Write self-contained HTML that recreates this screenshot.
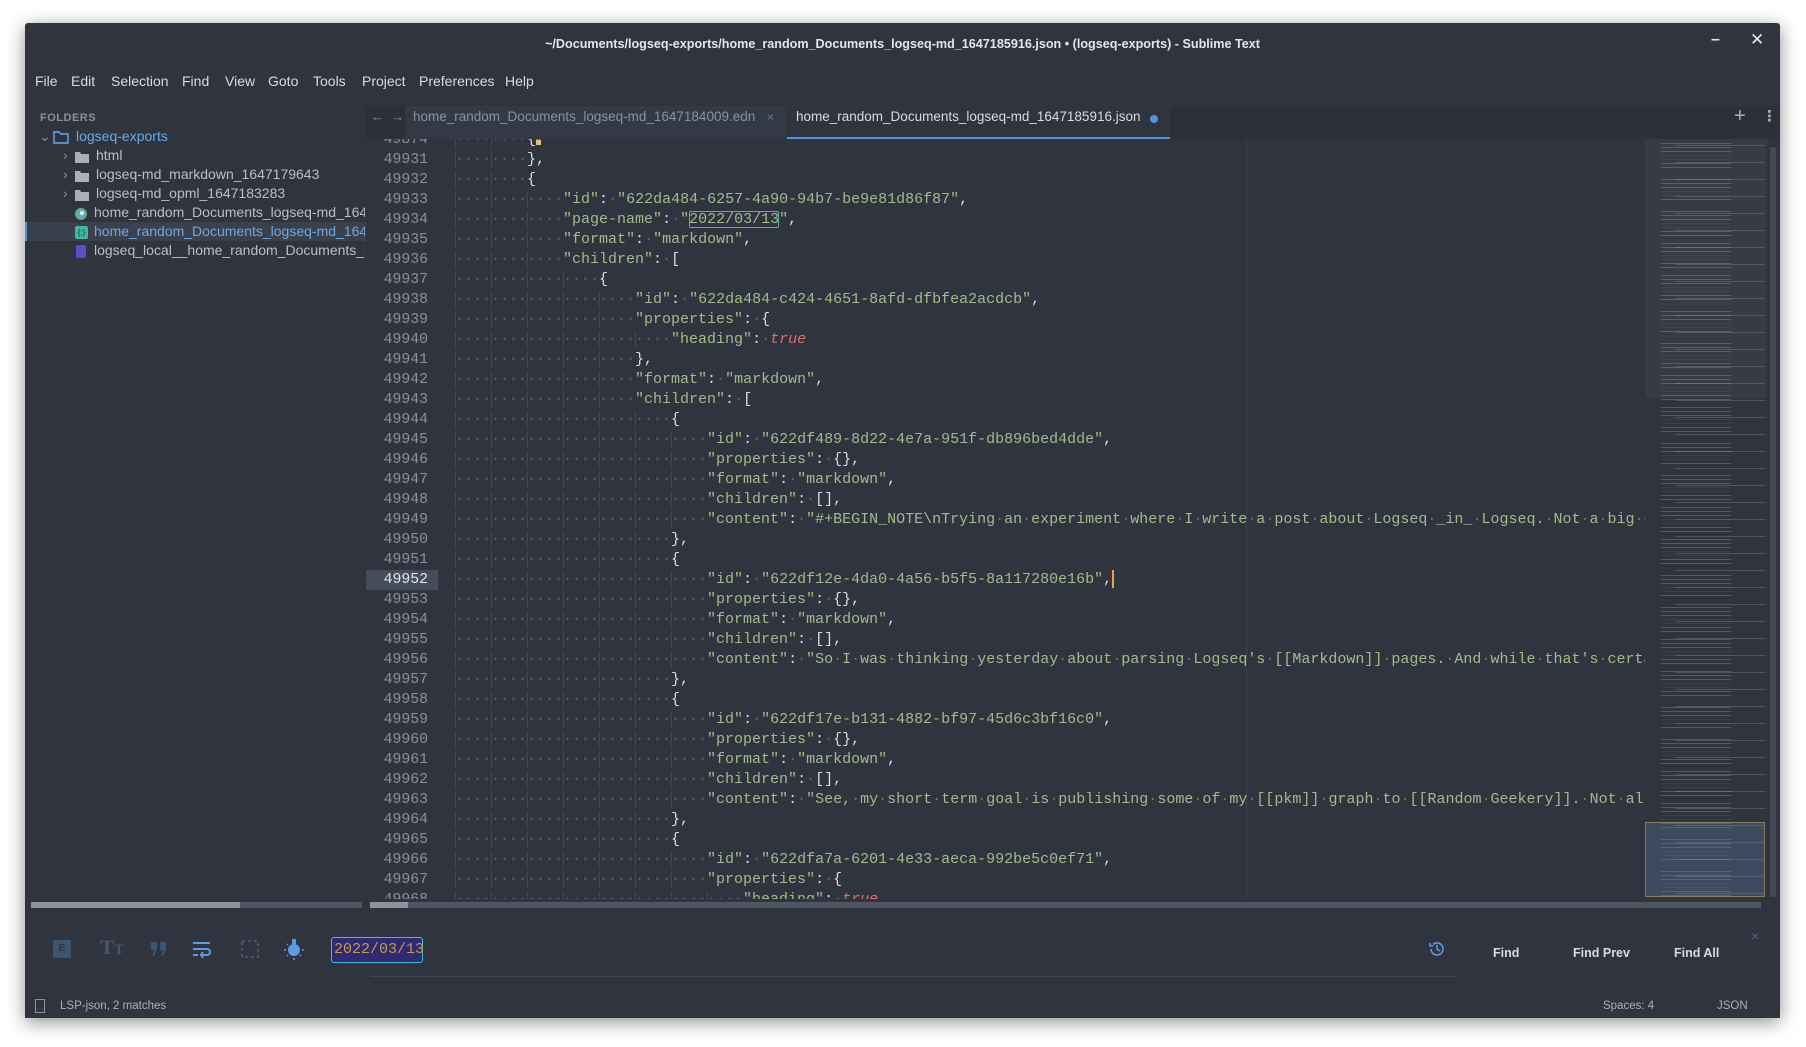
<!DOCTYPE html>
<html><head><meta charset="utf-8"><style>
*{margin:0;padding:0;box-sizing:border-box}
body{width:1806px;height:1047px;background:#fff;position:relative;overflow:hidden;font-family:"Liberation Sans","DejaVu Sans",sans-serif}
.win{position:absolute;left:25px;top:23px;width:1755px;height:995px;background:#2f343f;box-shadow:0 4px 18px rgba(0,0,0,.45);border-radius:3px 3px 0 0;overflow:hidden}
.a{position:absolute;white-space:nowrap}
.title{left:0;width:1755px;top:14px;text-align:center;color:#e4e6ea;font-weight:bold;font-size:12.6px}
.menu{top:50px;font-size:14px;color:#d8dce2}
.menu span{position:absolute;top:0}
.tree{font-size:14px;color:#b9bfc9}
.code{position:absolute;left:341px;top:116px;width:1279px;height:760px;overflow:hidden;font-family:"Liberation Mono","DejaVu Sans Mono",monospace;font-size:15px;color:#d8dee9}
.l{position:absolute;left:0;height:20px;line-height:20px;white-space:pre;width:1279px}
.n{position:absolute;left:0;width:62px;text-align:right;color:#8a919c;font-size:14.8px}
.c{position:absolute;left:89px}
.d{color:#5d6470;background:repeating-linear-gradient(to right,#434955 0 1px,transparent 1px 4ch)}
.s{color:#a3bb8b}
.s b{font-weight:normal;color:#6a7a62}
.t{color:#e06c75;font-style:italic}
.sp{color:#5d6470}
.hl{background:#464d5a}
</style></head><body>
<div class="win">
<div class="a title">~/Documents/logseq-exports/home_random_Documents_logseq-md_1647185916.json • (logseq-exports) - Sublime Text</div>
<div class="a" style="left:1686px;top:8px;color:#e4e6ea;font-size:16px;font-weight:bold">–</div>
<div class="a" style="left:1725px;top:7px;color:#e4e6ea;font-size:17px;font-weight:bold">✕</div>
<div class="a menu" style="left:0"><span style="left:10px">File</span><span style="left:46px">Edit</span><span style="left:86px">Selection</span><span style="left:157px">Find</span><span style="left:200px">View</span><span style="left:243px">Goto</span><span style="left:288px">Tools</span><span style="left:337px">Project</span><span style="left:394px">Preferences</span><span style="left:480px">Help</span></div>

<!-- sidebar -->
<div class="a" style="left:15px;top:89px;font-size:11px;font-weight:bold;color:#8b919b;letter-spacing:.5px">FOLDERS</div>
<div class="a" style="left:0;top:199px;width:341px;height:19px;background:#3a404c;border-left:2px solid #5294e2"></div>
<div class="a tree" style="left:14px;top:105px"><span style="color:#8a929e">⌄</span></div>
<svg class="a" style="left:28px;top:107px" width="16" height="14"><path d="M1 2h5l2 2h7v9H1z" fill="none" stroke="#6fa8e6" stroke-width="1.4"/></svg>
<div class="a tree" style="left:51px;top:105px;color:#6fa8e6">logseq-exports</div>
<div class="a tree" style="left:38px;top:124px;color:#8a929e">›</div><svg class="a" style="left:50px;top:128px" width="14" height="12"><path d="M0 1h5l1 2h8v9H0z" fill="#aab0ba"/></svg><div class="a tree" style="left:71px;top:124px">html</div>
<div class="a tree" style="left:38px;top:143px;color:#8a929e">›</div><svg class="a" style="left:50px;top:147px" width="14" height="12"><path d="M0 1h5l1 2h8v9H0z" fill="#aab0ba"/></svg><div class="a tree" style="left:71px;top:143px">logseq-md_markdown_1647179643</div>
<div class="a tree" style="left:38px;top:162px;color:#8a929e">›</div><svg class="a" style="left:50px;top:166px" width="14" height="12"><path d="M0 1h5l1 2h8v9H0z" fill="#aab0ba"/></svg><div class="a tree" style="left:71px;top:162px">logseq-md_opml_1647183283</div>
<svg class="a" style="left:49px;top:184px" width="14" height="14"><circle cx="7" cy="7" r="6" fill="#5ab66e"/><circle cx="7" cy="7" r="4" fill="#6aa0e6"/><circle cx="8" cy="6" r="2" fill="#e6eef6"/></svg><div class="a tree" style="left:69px;top:181px;width:271px;overflow:hidden">home_random_Documents_logseq-md_1647185916.edn</div>
<div class="a" style="left:50px;top:203px;width:13px;height:13px;background:#3fb9a0;border-radius:2px;font-size:8px;color:#1c3a3a;text-align:center;line-height:13px">{;}</div><div class="a tree" style="left:69px;top:200px;width:271px;overflow:hidden;color:#6fa8e6">home_random_Documents_logseq-md_1647185916.json</div>
<div class="a" style="left:51px;top:222px;width:10px;height:13px;background:#5a4fc4;border-radius:2px"></div><div class="a tree" style="left:69px;top:219px;width:271px;overflow:hidden">logseq_local__home_random_Documents_logseq-md.transit</div>

<!-- tabs -->
<div class="a" style="left:341px;top:83px;width:1414px;height:33px;background:#2b3039"></div>
<div class="a" style="left:346px;top:86px;color:#8a919c;font-size:13px">←&nbsp;&nbsp;→</div>
<div class="a" style="left:380px;top:83px;width:382px;height:33px;background:#343a45"></div>
<div class="a" style="left:388px;top:86px;color:#8a919c;font-size:13.5px">home_random_Documents_logseq-md_1647184009.edn</div>
<div class="a" style="left:742px;top:87px;color:#737a85;font-size:12px">×</div>
<div class="a" style="left:762px;top:83px;width:383px;height:33px;background:#2f343f;border-bottom:2px solid #5294e2"></div>
<div class="a" style="left:771px;top:86px;color:#d8dce2;font-size:13.5px">home_random_Documents_logseq-md_1647185916.json</div>
<div class="a" style="left:1125px;top:92px;width:8px;height:8px;border-radius:50%;background:#5294e2"></div>
<div class="a" style="left:1709px;top:82px;color:#aab0ba;font-size:20px">+</div>
<div class="a" style="left:1737px;top:84px;color:#aab0ba;font-size:15px;font-weight:bold">⋮</div>

<!-- code -->
<div class="code">
<div class="a" style="left:880px;top:0;width:1px;height:760px;background:#3d434e"></div>
<div class="l" style="top:-9px"><span class="n">49874</span><span class="c"><span class="d">········</span>{<span style="background:#e5c07b;color:#2f343f;font-size:9px;vertical-align:top">⋯</span></span></div>
<div class="l" style="top:11px"><span class="n">49931</span><span class="c"><span class="d">········</span>},</span></div>
<div class="l" style="top:31px"><span class="n">49932</span><span class="c"><span class="d">········</span>{</span></div>
<div class="l" style="top:51px"><span class="n">49933</span><span class="c"><span class="d">············</span><span class="s">"id"</span>:<span class="sp">·</span><span class="s">"622da484-6257-4a90-94b7-be9e81d86f87"</span>,</span></div>
<div class="l" style="top:71px"><span class="n">49934</span><span class="c"><span class="d">············</span><span class="s">"page-name"</span>:<span class="sp">·</span><span class="s">"<span style="outline:1px solid #5fa8b8;outline-offset:-1px;border-radius:2px">2022/03/13</span>"</span>,</span></div>
<div class="l" style="top:91px"><span class="n">49935</span><span class="c"><span class="d">············</span><span class="s">"format"</span>:<span class="sp">·</span><span class="s">"markdown"</span>,</span></div>
<div class="l" style="top:111px"><span class="n">49936</span><span class="c"><span class="d">············</span><span class="s">"children"</span>:<span class="sp">·</span>[</span></div>
<div class="l" style="top:131px"><span class="n">49937</span><span class="c"><span class="d">················</span>{</span></div>
<div class="l" style="top:151px"><span class="n">49938</span><span class="c"><span class="d">····················</span><span class="s">"id"</span>:<span class="sp">·</span><span class="s">"622da484-c424-4651-8afd-dfbfea2acdcb"</span>,</span></div>
<div class="l" style="top:171px"><span class="n">49939</span><span class="c"><span class="d">····················</span><span class="s">"properties"</span>:<span class="sp">·</span>{</span></div>
<div class="l" style="top:191px"><span class="n">49940</span><span class="c"><span class="d">························</span><span class="s">"heading"</span>:<span class="sp">·</span><span class="t">true</span></span></div>
<div class="l" style="top:211px"><span class="n">49941</span><span class="c"><span class="d">····················</span>},</span></div>
<div class="l" style="top:231px"><span class="n">49942</span><span class="c"><span class="d">····················</span><span class="s">"format"</span>:<span class="sp">·</span><span class="s">"markdown"</span>,</span></div>
<div class="l" style="top:251px"><span class="n">49943</span><span class="c"><span class="d">····················</span><span class="s">"children"</span>:<span class="sp">·</span>[</span></div>
<div class="l" style="top:271px"><span class="n">49944</span><span class="c"><span class="d">························</span>{</span></div>
<div class="l" style="top:291px"><span class="n">49945</span><span class="c"><span class="d">····························</span><span class="s">"id"</span>:<span class="sp">·</span><span class="s">"622df489-8d22-4e7a-951f-db896bed4dde"</span>,</span></div>
<div class="l" style="top:311px"><span class="n">49946</span><span class="c"><span class="d">····························</span><span class="s">"properties"</span>:<span class="sp">·</span>{},</span></div>
<div class="l" style="top:331px"><span class="n">49947</span><span class="c"><span class="d">····························</span><span class="s">"format"</span>:<span class="sp">·</span><span class="s">"markdown"</span>,</span></div>
<div class="l" style="top:351px"><span class="n">49948</span><span class="c"><span class="d">····························</span><span class="s">"children"</span>:<span class="sp">·</span>[],</span></div>
<div class="l" style="top:371px"><span class="n">49949</span><span class="c"><span class="d">····························</span><span class="s">"content"</span>:<span class="sp">·</span><span class="s">"#+BEGIN_NOTE\nTrying<b>·</b>an<b>·</b>experiment<b>·</b>where<b>·</b>I<b>·</b>write<b>·</b>a<b>·</b>post<b>·</b>about<b>·</b>Logseq<b>·</b>_in_<b>·</b>Logseq.<b>·</b>Not<b>·</b>a<b>·</b>big<b>·</b>deal</span></span></div>
<div class="l" style="top:391px"><span class="n">49950</span><span class="c"><span class="d">························</span>},</span></div>
<div class="l" style="top:411px"><span class="n">49951</span><span class="c"><span class="d">························</span>{</span></div>
<div class="l" style="top:431px"><span class="n hl" style="left:0;width:72px;padding-right:10px;color:#e4e6ea">49952</span><span class="c"><span class="d">····························</span><span class="s">"id"</span>:<span class="sp">·</span><span class="s">"622df12e-4da0-4a56-b5f5-8a117280e16b"</span>,<span style="display:inline-block;width:2px;height:18px;background:#e8a33d;vertical-align:middle"></span></span></div>
<div class="l" style="top:451px"><span class="n">49953</span><span class="c"><span class="d">····························</span><span class="s">"properties"</span>:<span class="sp">·</span>{},</span></div>
<div class="l" style="top:471px"><span class="n">49954</span><span class="c"><span class="d">····························</span><span class="s">"format"</span>:<span class="sp">·</span><span class="s">"markdown"</span>,</span></div>
<div class="l" style="top:491px"><span class="n">49955</span><span class="c"><span class="d">····························</span><span class="s">"children"</span>:<span class="sp">·</span>[],</span></div>
<div class="l" style="top:511px"><span class="n">49956</span><span class="c"><span class="d">····························</span><span class="s">"content"</span>:<span class="sp">·</span><span class="s">"So<b>·</b>I<b>·</b>was<b>·</b>thinking<b>·</b>yesterday<b>·</b>about<b>·</b>parsing<b>·</b>Logseq's<b>·</b>[[Markdown]]<b>·</b>pages.<b>·</b>And<b>·</b>while<b>·</b>that's<b>·</b>certainly</span></span></div>
<div class="l" style="top:531px"><span class="n">49957</span><span class="c"><span class="d">························</span>},</span></div>
<div class="l" style="top:551px"><span class="n">49958</span><span class="c"><span class="d">························</span>{</span></div>
<div class="l" style="top:571px"><span class="n">49959</span><span class="c"><span class="d">····························</span><span class="s">"id"</span>:<span class="sp">·</span><span class="s">"622df17e-b131-4882-bf97-45d6c3bf16c0"</span>,</span></div>
<div class="l" style="top:591px"><span class="n">49960</span><span class="c"><span class="d">····························</span><span class="s">"properties"</span>:<span class="sp">·</span>{},</span></div>
<div class="l" style="top:611px"><span class="n">49961</span><span class="c"><span class="d">····························</span><span class="s">"format"</span>:<span class="sp">·</span><span class="s">"markdown"</span>,</span></div>
<div class="l" style="top:631px"><span class="n">49962</span><span class="c"><span class="d">····························</span><span class="s">"children"</span>:<span class="sp">·</span>[],</span></div>
<div class="l" style="top:651px"><span class="n">49963</span><span class="c"><span class="d">····························</span><span class="s">"content"</span>:<span class="sp">·</span><span class="s">"See,<b>·</b>my<b>·</b>short<b>·</b>term<b>·</b>goal<b>·</b>is<b>·</b>publishing<b>·</b>some<b>·</b>of<b>·</b>my<b>·</b>[[pkm]]<b>·</b>graph<b>·</b>to<b>·</b>[[Random<b>·</b>Geekery]].<b>·</b>Not<b>·</b>all<b>·</b>of</span></span></div>
<div class="l" style="top:671px"><span class="n">49964</span><span class="c"><span class="d">························</span>},</span></div>
<div class="l" style="top:691px"><span class="n">49965</span><span class="c"><span class="d">························</span>{</span></div>
<div class="l" style="top:711px"><span class="n">49966</span><span class="c"><span class="d">····························</span><span class="s">"id"</span>:<span class="sp">·</span><span class="s">"622dfa7a-6201-4e33-aeca-992be5c0ef71"</span>,</span></div>
<div class="l" style="top:731px"><span class="n">49967</span><span class="c"><span class="d">····························</span><span class="s">"properties"</span>:<span class="sp">·</span>{</span></div>
<div class="l" style="top:751px"><span class="n">49968</span><span class="c"><span class="d">································</span><span class="s">"heading"</span>:<span class="sp">·</span><span class="t">true</span></span></div>
</div>

<!-- minimap -->
<div class="a" style="left:1620px;top:116px;width:122px;height:259px;background:rgba(255,255,255,.035)"></div>
<div class="a" style="left:1636px;top:120px;width:70px;height:755px;background:repeating-linear-gradient(to bottom,rgba(150,170,140,.35) 0 1px,transparent 1px 4px);-webkit-mask:repeating-linear-gradient(to bottom,#000 0 12px,rgba(0,0,0,.3) 12px 20px,#000 20px 27px,transparent 27px 33px)"></div>
<div class="a" style="left:1650px;top:122px;width:90px;height:750px;background:repeating-linear-gradient(to bottom,rgba(150,170,140,.3) 0 1px,transparent 1px 17px)"></div>
<div class="a" style="left:1620px;top:799px;width:120px;height:75px;background:rgba(90,120,160,.35);border:1px solid #8a7a55"></div>
<div class="a" style="left:1745px;top:124px;width:6px;height:750px;background:#434a56;border-radius:2px"></div>

<!-- scrollbars -->
<div class="a" style="left:6px;top:879px;width:331px;height:6px;background:#505764"></div>
<div class="a" style="left:6px;top:879px;width:209px;height:6px;background:#8c939e"></div>
<div class="a" style="left:345px;top:879px;width:1391px;height:6px;background:#505764"></div>
<div class="a" style="left:345px;top:879px;width:38px;height:6px;background:#8c939e"></div>

<!-- find panel -->
<div class="a" style="left:28px;top:917px;width:18px;height:18px;background:#3c5672;border-radius:2px;color:#2f343f;font-size:10px;font-weight:bold;text-align:center;line-height:18px">E</div>
<div class="a" style="left:75px;top:914px;color:#44566a;font-size:19px;font-weight:bold;font-family:'DejaVu Serif',serif">T<span style="font-size:13px">T</span></div>
<svg class="a" style="left:125px;top:918px" width="18" height="16"><path d="M1 1h6v7l-3 7H2l2-6H1zM10 1h6v7l-3 7h-2l2-6h-3z" fill="#3c5672"/></svg>
<svg class="a" style="left:167px;top:917px" width="20" height="20"><path d="M1 3h17M1 9h14a3 3 0 0 1 0 6h-5M1 15h5M11 12l-2 3 2 3" fill="none" stroke="#5f9be0" stroke-width="2"/></svg>
<svg class="a" style="left:216px;top:917px" width="19" height="19"><rect x="1" y="1" width="16" height="16" fill="none" stroke="#44566a" stroke-width="2" stroke-dasharray="3 3"/></svg>
<svg class="a" style="left:257px;top:914px" width="24" height="24"><circle cx="12" cy="13" r="6" fill="#5f9be0"/><rect x="10" y="2" width="4" height="7" fill="#5f9be0"/><path d="M2 13h2M20 13h2M12 21v2M5 19l1-1M18 18l1 1M5 7l1 1" stroke="#5f9be0" stroke-width="1.6"/></svg>
<div class="a" style="left:306px;top:914px;width:92px;height:26px;background:#2e2a73;border:1px solid #38c0dc;border-radius:3px;color:#c99a3e;font-family:'Liberation Mono',monospace;font-size:15px;line-height:24px;padding-left:2px">2022/03/13</div>
<div class="a" style="left:345px;top:953px;width:1086px;height:1px;background:#3f4551"></div>
<svg class="a" style="left:1403px;top:917px" width="18" height="18"><path d="M3 9a6 6 0 1 0 2-4.5M2 3v3h3M9 5v4l3 2" fill="none" stroke="#5f9be0" stroke-width="1.6"/></svg>
<div class="a" style="left:1468px;top:923px;color:#d8dce2;font-size:12.5px;font-weight:bold">Find</div>
<div class="a" style="left:1548px;top:923px;color:#d8dce2;font-size:12.5px;font-weight:bold">Find Prev</div>
<div class="a" style="left:1649px;top:923px;color:#d8dce2;font-size:12.5px;font-weight:bold">Find All</div>
<div class="a" style="left:1726px;top:905px;color:#4f6a8c;font-size:14px">×</div>

<!-- status -->
<div class="a" style="left:10px;top:976px;width:10px;height:14px;border:1px solid #8a919c"></div>
<div class="a" style="left:35px;top:977px;color:#aab0ba;font-size:11.5px">LSP-json, 2 matches</div>
<div class="a" style="left:1578px;top:977px;color:#aab0ba;font-size:11.5px">Spaces: 4</div>
<div class="a" style="left:1692px;top:977px;color:#aab0ba;font-size:11.5px">JSON</div>
</div>
</body></html>
